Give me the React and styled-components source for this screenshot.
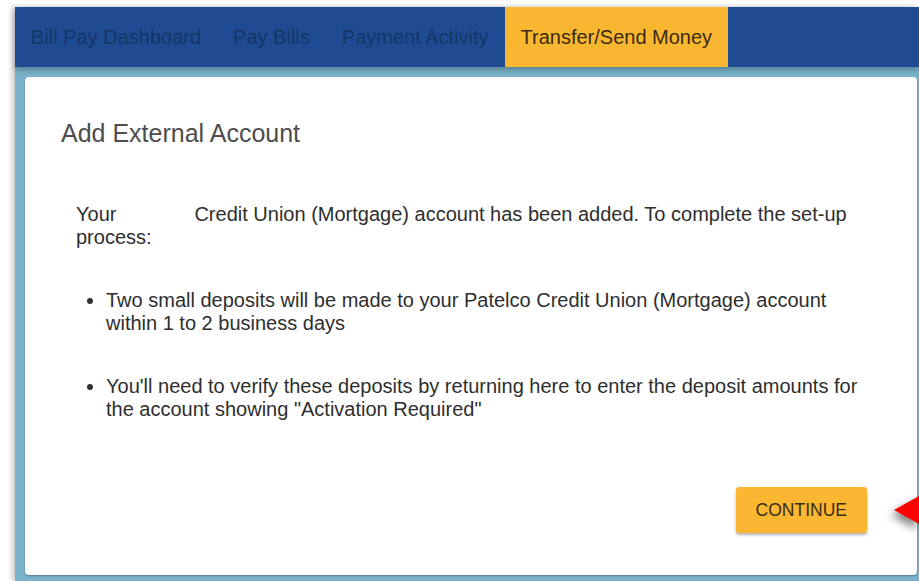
import { createGlobalStyle, styled } from "styled-components";

const GlobalStyle = createGlobalStyle`
  html, body {
    margin: 0;
    padding: 0;
    background: #ffffff;
    overflow: hidden;
  }
  body {
    font-family: "Liberation Sans", Arial, sans-serif;
  }
`;

const Page = styled.div`
  position: relative;
  height: 581px;
  box-sizing: border-box;
  padding: 7px 0 0 15px;
  display: flex;
`;

const Shell = styled.div`
  flex: 1;
  display: flex;
  flex-direction: column;
  background: #79b3cb;
  box-shadow: -3px 0 5px rgba(0, 0, 0, 0.22);
`;

const NavBar = styled.nav`
  display: flex;
  height: 60px;
  flex-shrink: 0;
  background: #1f4b92;
  box-shadow: 0 3px 6px rgba(0, 0, 0, 0.28);
  position: relative;
  z-index: 1;
`;

const NavItem = styled.a`
  display: flex;
  align-items: center;
  padding: 0 16px;
  font-size: 20px;
  color: ${(p) => (p.$active ? "#3b2a0e" : "#163567")};
  background: ${(p) => (p.$active ? "#f9b731" : "transparent")};
  text-decoration: none;
  white-space: nowrap;
`;

const Content = styled.main`
  flex: 1;
  display: flex;
  padding: 10px 2px 6px 10px;
`;

const Card = styled.section`
  flex: 1;
  display: flex;
  flex-direction: column;
  background: #ffffff;
  border-radius: 4px;
  box-shadow: 0 1px 2px rgba(0, 0, 0, 0.35);
  padding: 42px 50px 42px 36px;
`;

const Title = styled.h2`
  margin: 0;
  font-size: 25px;
  font-weight: normal;
  color: #4d4d4d;
  line-height: 28px;
`;

const Body = styled.div`
  margin-top: 56px;
  padding-left: 15px;
  padding-right: 6px;
  color: #2e2e2e;
  font-size: 20px;
  line-height: 23px;
`;

const Para = styled.p`
  margin: 0;
`;

/* space left where the institution name sits in the sentence */
const NameGap = styled.span`
  display: inline-block;
  width: 78px;
`;

const Steps = styled.ul`
  margin: 40px 0 0;
  padding-left: 30px;
`;

const Step = styled.li`
  margin-bottom: 40px;
`;

const Footer = styled.div`
  margin-top: auto;
  display: flex;
  justify-content: flex-end;
`;

const ContinueButton = styled.button`
  font-family: inherit;
  font-size: 17.5px;
  color: #3a2c10;
  background: #fbb731;
  border: none;
  border-radius: 3px;
  height: 46px;
  padding: 0 20px;
  box-shadow: 0 2px 3px rgba(0, 0, 0, 0.3);
  cursor: pointer;
`;

const Pointer = styled.svg`
  position: absolute;
  right: 0;
  top: 490px;
  width: 26px;
  height: 40px;
  filter: drop-shadow(-3px 5px 4px rgba(0, 0, 0, 0.5));
`;

const App = () => {
  return (
    <Page>
      <GlobalStyle />
      <Shell>
        <NavBar>
          <NavItem>Bill Pay Dashboard</NavItem>
          <NavItem>Pay Bills</NavItem>
          <NavItem>Payment Activity</NavItem>
          <NavItem $active>Transfer/Send Money</NavItem>
        </NavBar>
        <Content>
          <Card>
            <Title>Add External Account</Title>
            <Body>
              <Para>
                Your<NameGap />Credit Union (Mortgage) account has been added. To complete the
                set-up process:
              </Para>
              <Steps>
                <Step>
                  Two small deposits will be made to your Patelco Credit Union (Mortgage) account
                  within 1 to 2 business days
                </Step>
                <Step>
                  You'll need to verify these deposits by returning here to enter the deposit
                  amounts for the account showing "Activation Required"
                </Step>
              </Steps>
            </Body>
            <Footer>
              <ContinueButton>CONTINUE</ContinueButton>
            </Footer>
          </Card>
        </Content>
      </Shell>
      <Pointer viewBox="0 0 26 40">
        <polygon points="1,20 26,6 26,34" fill="#ff0000" />
      </Pointer>
    </Page>
  );
};

export default App;
